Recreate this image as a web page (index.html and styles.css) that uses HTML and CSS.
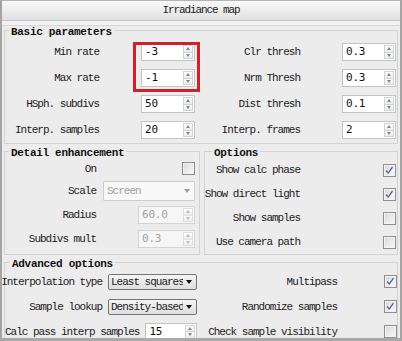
FILE: index.html
```html
<!DOCTYPE html>
<html lang="en">
<head>
    <meta charset="UTF-8">
    <title>Irradiance map</title>
    <link rel="stylesheet" href="styles.css">
</head>
<body>
    <div class="win">
        <div class="title">Irradiance map</div>
        <div class="strip"></div>

        <fieldset class="group basic">
            <legend>Basic parameters</legend>
            <div class="basic-grid">
                <span class="lbl">Min rate</span>
                <div class="hl">
                    <div class="spin"><span class="val">-3</span><span class="arrows"><i class="up"></i><i class="dn"></i></span></div>
                    <div class="spin"><span class="val">-1</span><span class="arrows"><i class="up"></i><i class="dn"></i></span></div>
                </div>
                <span class="lbl">Clr thresh</span>
                <div class="spin"><span class="val">0.3</span><span class="arrows"><i class="up"></i><i class="dn"></i></span></div>

                <span class="lbl">Max rate</span>
                <span class="lbl">Nrm Thresh</span>
                <div class="spin"><span class="val">0.3</span><span class="arrows"><i class="up"></i><i class="dn"></i></span></div>

                <span class="lbl">HSph. subdivs</span>
                <div class="spin"><span class="val">50</span><span class="arrows"><i class="up"></i><i class="dn"></i></span></div>
                <span class="lbl">Dist thresh</span>
                <div class="spin"><span class="val">0.1</span><span class="arrows"><i class="up"></i><i class="dn"></i></span></div>

                <span class="lbl">Interp. samples</span>
                <div class="spin"><span class="val">20</span><span class="arrows"><i class="up"></i><i class="dn"></i></span></div>
                <span class="lbl">Interp. frames</span>
                <div class="spin"><span class="val">2</span><span class="arrows"><i class="up"></i><i class="dn"></i></span></div>
            </div>
        </fieldset>

        <div class="split">
            <fieldset class="group detail">
                <legend>Detail enhancement</legend>
                <div class="detail-grid">
                    <span class="lbl">On</span>
                    <span class="chk"></span>

                    <span class="lbl">Scale</span>
                    <div class="combo off"><span class="combo-text">Screen</span><i class="caret"></i></div>

                    <span class="lbl">Radius</span>
                    <div class="spin off wide"><span class="val">60.0</span><span class="arrows"><i class="up"></i><i class="dn"></i></span></div>

                    <span class="lbl">Subdivs mult</span>
                    <div class="spin off wide"><span class="val">0.3</span><span class="arrows"><i class="up"></i><i class="dn"></i></span></div>
                </div>
            </fieldset>

            <fieldset class="group options">
                <legend>Options</legend>
                <div class="options-grid">
                    <span class="lbl">Show calc phase</span>
                    <span class="chk"><svg viewBox="0 0 13 13" width="11" height="11"><path d="M2.5 6.5 L5 9.5 L10 2.5" fill="none" stroke="#45608f" stroke-width="1.5"/></svg></span>

                    <span class="lbl">Show direct light</span>
                    <span class="chk"><svg viewBox="0 0 13 13" width="11" height="11"><path d="M2.5 6.5 L5 9.5 L10 2.5" fill="none" stroke="#45608f" stroke-width="1.5"/></svg></span>

                    <span class="lbl">Show samples</span>
                    <span class="chk"></span>

                    <span class="lbl">Use camera path</span>
                    <span class="chk"></span>
                </div>
            </fieldset>
        </div>

        <fieldset class="group advanced">
            <legend>Advanced options</legend>
            <div class="adv-grid">
                <div class="row">
                    <span class="lbl">Interpolation type</span>
                    <div class="combo"><span class="combo-text">Least squares</span><i class="caret"></i></div>
                </div>
                <div class="rrow">
                    <span class="lbl">Multipass</span>
                    <span class="chk"><svg viewBox="0 0 13 13" width="11" height="11"><path d="M2.5 6.5 L5 9.5 L10 2.5" fill="none" stroke="#45608f" stroke-width="1.5"/></svg></span>
                </div>

                <div class="row">
                    <span class="lbl">Sample lookup</span>
                    <div class="combo"><span class="combo-text">Density-based</span><i class="caret"></i></div>
                </div>
                <div class="rrow">
                    <span class="lbl">Randomize samples</span>
                    <span class="chk"><svg viewBox="0 0 13 13" width="11" height="11"><path d="M2.5 6.5 L5 9.5 L10 2.5" fill="none" stroke="#45608f" stroke-width="1.5"/></svg></span>
                </div>

                <div class="row">
                    <span class="lbl">Calc pass interp samples</span>
                    <div class="spin"><span class="val">15</span><span class="arrows"><i class="up"></i><i class="dn"></i></span></div>
                </div>
                <div class="rrow">
                    <span class="lbl">Check sample visibility</span>
                    <span class="chk"></span>
                </div>
            </div>
        </fieldset>
    </div>
</body>
</html>
```

FILE: styles.css
```css
body {
    margin: 0;
    background-color: #ececec;
    font-family: "Liberation Mono", monospace;
    font-size: 11px;
    letter-spacing: -1px;
    color: #1c1c1c;
}
.win {
    width: 402px;
    height: 341px;
    box-sizing: border-box;
    border: 2px solid #a4a4a4;
    border-top: 1px solid #b4b4b4;
    border-bottom: 3px solid #a9a9a9;
    overflow: hidden;
    background-color: #ececec;
}
.title {
    height: 19px;
    line-height: 19px;
    text-align: center;
    letter-spacing: -1.1px;
    background: linear-gradient(#f9f9f9, #e0e0e0);
    border-bottom: 1px solid #c4c4c4;
}
.strip {
    height: 4px;
    background-color: #f3f3f3;
    border-bottom: 1px solid #d6d6d6;
}
/* group boxes */
.group {
    margin: 0 2px;
    padding: 0;
    min-width: 0;
    box-sizing: border-box;
    border: 1px solid #d2d2d2;
}
.group legend {
    margin-left: 4px;
    padding: 4px 2px 0 2px;
    line-height: 10px;
    font-weight: bold;
    letter-spacing: -0.3px;
    color: #111;
}
.basic {
    margin-top: -3px;
}
.split {
    display: flex;
    gap: 4px;
    margin: 0 2px;
}
.split .group {
    margin: 0;
}
.detail {
    flex: 0 0 196px;
}
.options {
    flex: 1;
}
.options legend {
    margin-left: 7px;
}
.advanced legend {
    margin-left: 5px;
}
.lbl {
    display: flex;
    justify-content: flex-end;
    white-space: nowrap;
}
.basic-grid {
    display: grid;
    grid-template-columns: 94px 96px 105px 96px;
    grid-auto-rows: 26px;
    align-items: center;
    padding-top: 2px;
}
.basic-grid > .spin {
    justify-self: end;
}
.hl {
    grid-row: span 2;
    align-self: stretch;
    display: grid;
    grid-template-rows: 26px 26px;
    align-items: center;
    justify-items: end;
    position: relative;
}
.hl::after {
    content: "";
    position: absolute;
    left: 34px;
    right: -5px;
    top: 3px;
    bottom: -1px;
    border: 3px solid #d0202a;
}
.detail-grid {
    display: grid;
    grid-template-columns: 91px 1fr;
    grid-template-rows: 21px 24px 24px 24px;
    align-items: center;
    padding: 0 4px 3px 0;
}
.detail-grid > :nth-child(even) {
    justify-self: end;
}
.options-grid {
    display: grid;
    grid-template-columns: 95px 1fr;
    grid-template-rows: repeat(4, 24px);
    align-items: center;
    padding-right: 1px;
}
.options-grid > .chk {
    justify-self: end;
}
.adv-grid {
    display: grid;
    grid-template-columns: 192px 1fr;
    grid-auto-rows: 25px;
    align-items: center;
}
.row {
    display: flex;
    justify-content: flex-end;
    align-items: center;
    gap: 6px;
}
.row .lbl {
    flex-shrink: 0;
}
.rrow {
    display: grid;
    grid-template-columns: 140px 1fr;
    align-items: center;
}
.rrow .chk {
    justify-self: end;
}
/* spinner */
.spin {
    display: flex;
    width: 54px;
    height: 18px;
    box-sizing: border-box;
    border: 1px solid #c4c4c4;
    background-color: #fff;
}
.spin.wide {
    width: 57px;
}
.val {
    flex: 1;
    padding-left: 3px;
    line-height: 16px;
    font-family: "DejaVu Sans Mono", monospace;
    font-size: 11px;
    letter-spacing: -0.2px;
    color: #111;
}
.arrows {
    width: 10px;
    margin: 1px;
    display: flex;
    flex-direction: column;
}
.arrows i {
    flex: 1;
    display: flex;
    align-items: center;
    justify-content: center;
    box-sizing: border-box;
    border: 1px solid #d2d2d2;
    background: linear-gradient(#fdfdfd, #ebebeb);
}
.arrows .dn {
    border-top: none;
}
.arrows .up::before {
    content: "";
    border-left: 2.5px solid transparent;
    border-right: 2.5px solid transparent;
    border-bottom: 3px solid #7487a0;
}
.arrows .dn::before {
    content: "";
    border-left: 2.5px solid transparent;
    border-right: 2.5px solid transparent;
    border-top: 3px solid #7487a0;
}
.spin.off {
    background-color: #f6f6f6;
    border-color: #d4d4d4;
}
.spin.off .val {
    color: #a2a2a2;
}
.spin.off .arrows i {
    border-color: #dedede;
}
.spin.off .up::before {
    border-bottom-color: #b3b9c2;
}
.spin.off .dn::before {
    border-top-color: #b3b9c2;
}
/* drop-down */
.combo {
    display: flex;
    align-items: center;
    width: 89px;
    height: 16px;
    box-sizing: border-box;
    border: 1px solid #747474;
    border-radius: 2px;
    background: linear-gradient(#f4f4f4, #dedede);
}
.combo-text {
    flex: 1;
    overflow: hidden;
    white-space: nowrap;
    padding-left: 2px;
    line-height: 14px;
}
.caret {
    width: 0;
    height: 0;
    margin: 0 4px 0 3px;
    border-left: 3.5px solid transparent;
    border-right: 3.5px solid transparent;
    border-top: 4px solid #111;
}
.combo.off {
    width: 92px;
    height: 20px;
    border-color: #cdcdcd;
    border-radius: 1px;
    background: #f8f8f8;
    color: #a0a0a0;
}
.combo.off .combo-text {
    padding-left: 3px;
}
.combo.off .caret {
    border-top-color: #9c9c9c;
}
/* checkbox */
.chk {
    width: 13px;
    height: 13px;
    box-sizing: border-box;
    border: 1px solid #8f8f8f;
    background: linear-gradient(135deg, #d8d8d8, #fafafa);
    box-shadow: inset 0 0 0 1px #f2f2f2;
    display: flex;
    align-items: center;
    justify-content: center;
}
```
